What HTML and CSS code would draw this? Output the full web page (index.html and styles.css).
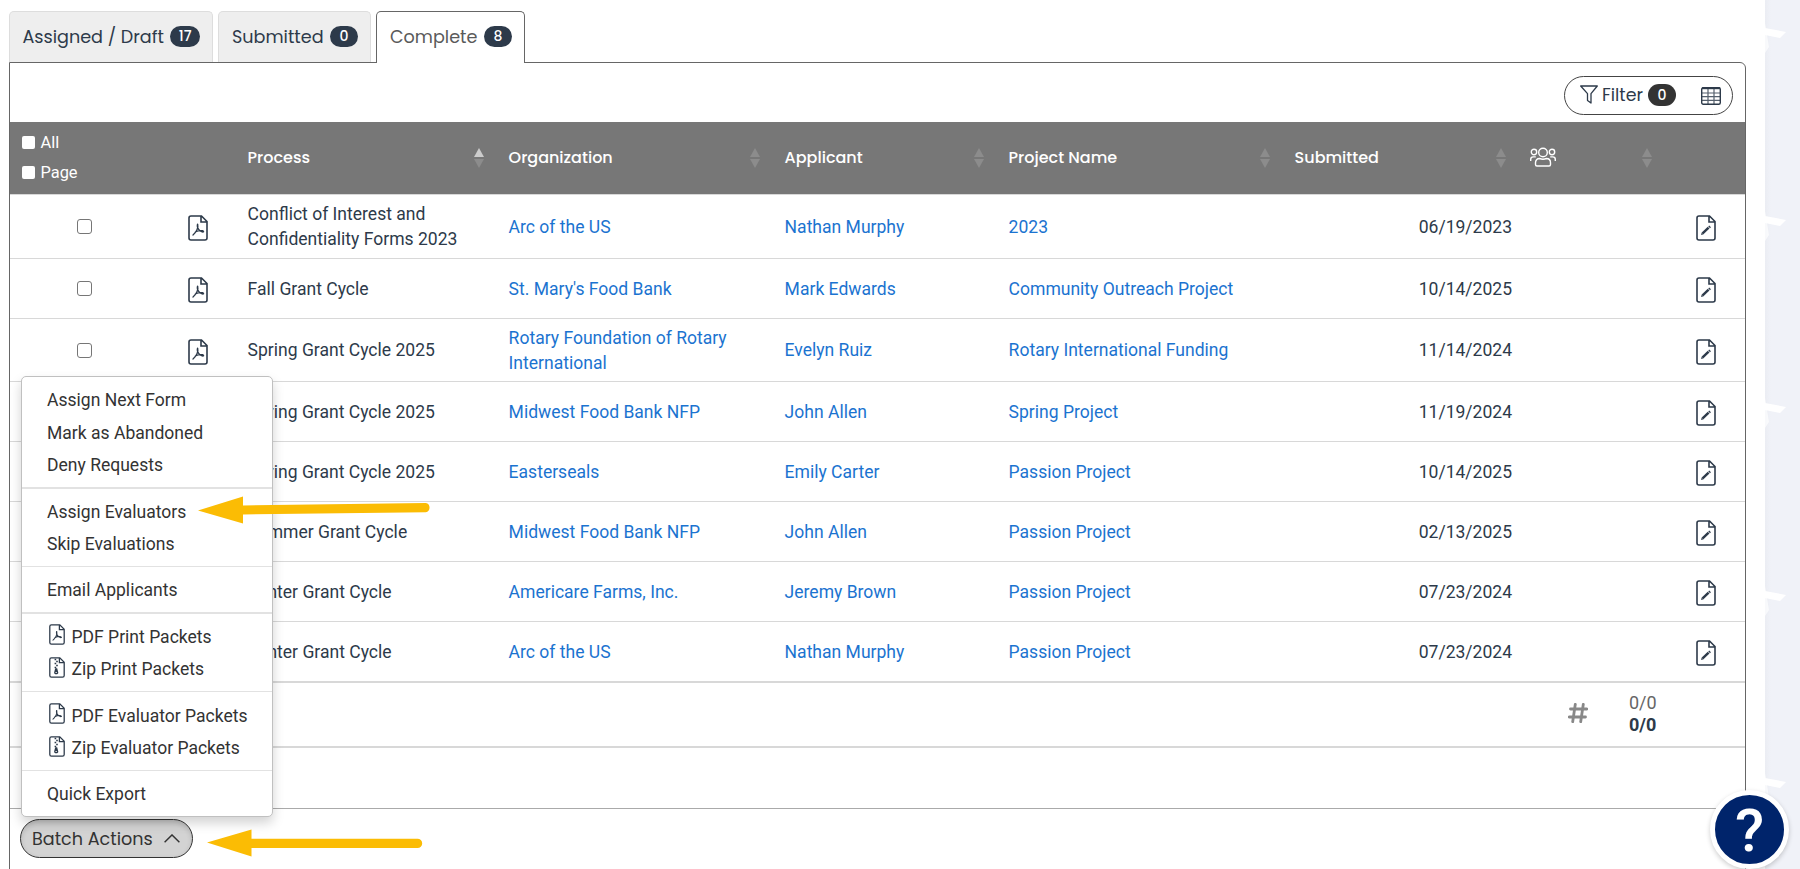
FILE: index.html
```html
<!DOCTYPE html>
<html lang="en">
<head>
<meta charset="utf-8">
<title>Requests</title>
<link rel="stylesheet" href="styles.css">
</head>
<body>
<svg class="defs" aria-hidden="true">
  <symbol id="pdf" viewBox="0 0 20 26"><path d="M3 1h10.500L19 6.500V23a2 2 0 0 1-2 2H3a2 2 0 0 1-2-2V3a2 2 0 0 1 2-2zM13 1v6h6" fill="none" stroke="currentColor" stroke-width="1.600"/><path d="M9.500 9.200c-.8 3 .6 5 2.400 6.500 1.400 1 3 1.600 3.700 1M9.700 9.200c1.100 3.500-1.800 8.500-4.700 10.800M7.300 17c2.200-1.200 4.700-1.700 7.700-1.300" fill="none" stroke="currentColor" stroke-width="1.300" stroke-linecap="round"/></symbol>
  <symbol id="zip" viewBox="0 0 20 26"><path d="M3 1h10.500L19 6.500V23a2 2 0 0 1-2 2H3a2 2 0 0 1-2-2V3a2 2 0 0 1 2-2zM13 1v6h6" fill="none" stroke="currentColor" stroke-width="1.600"/><path d="M7 3h2M9 5.500h2M7 8h2M9 10.500h2M7 13h2" stroke="currentColor" stroke-width="1.700"/><path d="M7.800 14h2.400l1.400 5.300c.2 1.300-.9 2.200-2.600 2.200s-2.800-.9-2.600-2.200z" fill="currentColor"/><path d="M8 19.200h2" stroke="#fff" stroke-width="1"/></symbol>
  <symbol id="edit" viewBox="0 0 20 26"><path d="M3 1h10.500L19 6.500V23a2 2 0 0 1-2 2H3a2 2 0 0 1-2-2V3a2 2 0 0 1 2-2zM13 1v6h6" fill="none" stroke="currentColor" stroke-width="1.600"/><path d="M6.600 18.300l6-5.600" stroke="currentColor" stroke-width="2.500"/><path d="M13.100 12.300l1-.9" stroke="currentColor" stroke-width="2.500"/><path d="M5.100 20l.6-2.500 1.900 1.800z" fill="currentColor"/></symbol>
  <symbol id="sort" viewBox="0 0 10 20"><path d="M5 0l5 9H0z" fill="currentColor"/><path d="M0 11h10l-5 9z"/></symbol>
</svg>
<main class="page">
  <nav class="tabs">
    <a class="tab tab-draft"><span>Assigned / Draft</span><b class="badge">17</b></a>
    <a class="tab tab-submitted"><span>Submitted</span><b class="badge">0</b></a>
    <a class="tab tab-complete active"><span>Complete</span><b class="badge">8</b></a>
  </nav>
  <section class="panel">
    <div class="toolbar">
      <div class="filter">
        <svg class="funnel" viewBox="0 0 18 19"><path d="M.7 1h16.600L11 8.600V18l-3.500-2.600V8.600z" fill="none" stroke="currentColor" stroke-width="1.300" stroke-linejoin="round"/></svg>
        <span class="filter-label">Filter</span><b class="badge dark">0</b>
        <svg class="gridicon" viewBox="0 0 20 18"><rect x=".7" y=".7" width="18.600" height="16.600" rx="1.500" fill="none" stroke="currentColor" stroke-width="1.400"/><path d="M1 1.200h18" stroke="currentColor" stroke-width="2"/><path d="M1 6h18M1 9.700h18M1 13.400h18M7 2v15M13 2v15" stroke="currentColor" stroke-width="1.200" opacity=".8"/></svg>
      </div>
    </div>
    <div class="row head">
      <div class="picks"><label><i class="box solid"></i><span>All</span></label><label><i class="box solid"></i><span>Page</span></label></div>
      <div></div>
      <div class="th sorted"><span>Process</span><svg class="sort"><use href="#sort"/></svg></div>
      <div class="th"><span>Organization</span><svg class="sort"><use href="#sort"/></svg></div>
      <div class="th"><span>Applicant</span><svg class="sort"><use href="#sort"/></svg></div>
      <div class="th"><span>Project Name</span><svg class="sort"><use href="#sort"/></svg></div>
      <div class="th"><span>Submitted</span><svg class="sort"><use href="#sort"/></svg></div>
      <div class="th"><svg class="group" viewBox="0 0 26 20"><g fill="none" stroke="currentColor" stroke-width="1.400"><circle cx="13" cy="5.500" r="4.300"/><circle cx="4" cy="5" r="2.700"/><circle cx="22" cy="5" r="2.700"/><path d="M5.500 17.500v-1.700c0-2.500 1.500-4.300 4-4.300 2 .8 5 .8 7 0 2.500 0 4 1.800 4 4.300v1.700c0 .9-.6 1.500-1.500 1.500H7c-.9 0-1.500-.6-1.500-1.500z"/><path d="M.7 14v-1.500c0-1.600 1-2.600 2.500-2.600h2.600M25.300 14v-1.500c0-1.600-1-2.600-2.500-2.600h-2.600"/></g></svg><svg class="sort"><use href="#sort"/></svg></div>
      <div></div>
    </div>
    <div class="row first"><div class="mid"><i class="box"></i></div><div class="mid"><svg class="doc"><use href="#pdf"/></svg></div><div class="td">Conflict of Interest and Confidentiality Forms 2023</div><a class="td">Arc of the US</a><a class="td">Nathan Murphy</a><a class="td">2023</a><div class="td date">06/19/2023</div><div></div><div class="mid"><svg class="doc"><use href="#edit"/></svg></div></div>
    <div class="row"><div class="mid"><i class="box"></i></div><div class="mid"><svg class="doc"><use href="#pdf"/></svg></div><div class="td">Fall Grant Cycle</div><a class="td">St. Mary's Food Bank</a><a class="td">Mark Edwards</a><a class="td">Community Outreach Project</a><div class="td date">10/14/2025</div><div></div><div class="mid"><svg class="doc"><use href="#edit"/></svg></div></div>
    <div class="row third"><div class="mid"><i class="box"></i></div><div class="mid"><svg class="doc"><use href="#pdf"/></svg></div><div class="td">Spring Grant Cycle 2025</div><a class="td">Rotary Foundation of Rotary International</a><a class="td">Evelyn Ruiz</a><a class="td">Rotary International Funding</a><div class="td date">11/14/2024</div><div></div><div class="mid"><svg class="doc"><use href="#edit"/></svg></div></div>
    <div class="row"><div class="mid"><i class="box"></i></div><div class="mid"><svg class="doc"><use href="#pdf"/></svg></div><div class="td">Spring Grant Cycle 2025</div><a class="td">Midwest Food Bank NFP</a><a class="td">John Allen</a><a class="td">Spring Project</a><div class="td date">11/19/2024</div><div></div><div class="mid"><svg class="doc"><use href="#edit"/></svg></div></div>
    <div class="row"><div class="mid"><i class="box"></i></div><div class="mid"><svg class="doc"><use href="#pdf"/></svg></div><div class="td">Spring Grant Cycle 2025</div><a class="td">Easterseals</a><a class="td">Emily Carter</a><a class="td">Passion Project</a><div class="td date">10/14/2025</div><div></div><div class="mid"><svg class="doc"><use href="#edit"/></svg></div></div>
    <div class="row"><div class="mid"><i class="box"></i></div><div class="mid"><svg class="doc"><use href="#pdf"/></svg></div><div class="td">Summer Grant Cycle</div><a class="td">Midwest Food Bank NFP</a><a class="td">John Allen</a><a class="td">Passion Project</a><div class="td date">02/13/2025</div><div></div><div class="mid"><svg class="doc"><use href="#edit"/></svg></div></div>
    <div class="row"><div class="mid"><i class="box"></i></div><div class="mid"><svg class="doc"><use href="#pdf"/></svg></div><div class="td">Winter Grant Cycle</div><a class="td">Americare Farms, Inc.</a><a class="td">Jeremy Brown</a><a class="td">Passion Project</a><div class="td date">07/23/2024</div><div></div><div class="mid"><svg class="doc"><use href="#edit"/></svg></div></div>
    <div class="row last"><div class="mid"><i class="box"></i></div><div class="mid"><svg class="doc"><use href="#pdf"/></svg></div><div class="td">Winter Grant Cycle</div><a class="td">Arc of the US</a><a class="td">Nathan Murphy</a><a class="td">Passion Project</a><div class="td date">07/23/2024</div><div></div><div class="mid"><svg class="doc"><use href="#edit"/></svg></div></div>
    <div class="totals">
      <svg class="hash" viewBox="0 0 20 20"><path d="M7.300 1.300L4.700 18.700M15.300 1.300l-2.600 17.400M2.500 6h16.200M1.300 14h16.200" fill="none" stroke="currentColor" stroke-width="2.800" stroke-linecap="round"/></svg>
      <div class="counts"><span>0/0</span><b>0/0</b></div>
    </div>
    <div class="pager"></div>
    <div class="actions">
      <button class="batch"><span>Batch Actions</span><svg viewBox="0 0 16 9"><path d="M.6 8.300L8 .9l7.400 7.400" fill="none" stroke="currentColor" stroke-width="1.400"/></svg></button>
    </div>
  </section>
</main>
<aside class="backdrop"></aside>
<div class="menu">
  <a><span>Assign Next Form</span></a><a><span>Mark as Abandoned</span></a><a><span>Deny Requests</span></a><hr class="thick">
  <a><span>Assign Evaluators</span></a><a><span>Skip Evaluations</span></a><hr>
  <a><span>Email Applicants</span></a><hr class="thick">
  <a><svg><use href="#pdf"/></svg><span>PDF Print Packets</span></a><a><svg><use href="#zip"/></svg><span>Zip Print Packets</span></a><hr>
  <a><svg><use href="#pdf"/></svg><span>PDF Evaluator Packets</span></a><a><svg><use href="#zip"/></svg><span>Zip Evaluator Packets</span></a><hr>
  <a><span>Quick Export</span></a>
</div>
<svg class="pointers" viewBox="0 0 1800 869">
  <path d="M198 510.500L243 496.500V505.500L425.800 503a4.700 4.700 0 0 1 0 9.200L243 514.500V523.500z"/>
  <path d="M207 842.500L251.500 829.500V838.700H417.500a4.700 4.700 0 0 1 0 9.400H251.500V856.500z"/>
</svg>
<svg class="backdrop-marks" viewBox="0 0 36 869"><defs><g id="mark"><path d="M1 28l21 4-6 6-15-3z"/><path d="M1 23l1 5-1 1zM1 35h2l2 12-4 6z" opacity=".65"/></g></defs><use href="#mark"/><use href="#mark" y="188"/><use href="#mark" y="375"/><use href="#mark" y="563"/><use href="#mark" y="750"/></svg>
<div class="help"><span>?</span></div>
</body>
</html>
```
FILE: styles.css
```css
* { box-sizing: border-box; }
html, body { height: 869px; overflow: hidden; }
body {
  margin: 0;
  display: flex;
  position: relative;
  background: #f0f2f8;
  color: #2d3a4a;
  font: 17.550px/25px Roboto, sans-serif;
}
.defs { position: absolute; width: 0; height: 0; }
.page { width: 1765px; height: 869px; padding: 11px 19px 0 9px; background: #fff; }
.backdrop { flex: 1; background: linear-gradient(90deg, #ebedf3, #f0f2f8 6px); }
.tabs { display: flex; gap: 5px; height: 51px; }
.tab {
  display: flex; align-items: center; justify-content: space-between;
  height: 51px; padding: 0 12px 2px 13px;
  border: 1px solid #ddd; border-bottom: 0; border-radius: 5px 5px 0 0;
  background: #eee;
}
.tab span { margin-top: 2px; }
.tab, .filter-label, .th, .batch { font-family: Poppins, Inter, sans-serif; white-space: nowrap; }
.tab { font-size: 17.600px; }
.tab-draft { width: 204px; padding-left: 12.500px; }
.tab-submitted { width: 153px; }
.tab-complete { width: 149px; }
.tab.active { height: 52px; padding-bottom: 3px; background: #fff; border-color: #666; color: #5a5a5a; z-index: 1; }
.badge {
  display: flex; align-items: center; justify-content: center; flex: none;
  min-width: 28px; height: 21px; padding: 0 8.500px; border-radius: 11px;
  background: #2d3a4a; color: #fff; font: 500 14px/21px Poppins, Inter, sans-serif;
}
.badge.dark { background: #333; height: 22px; margin-top: -1px; }
.panel { width: 1737px; height: 830px; border: 1px solid #666; border-radius: 0 6px 0 0; }
.toolbar { height: 59px; padding: 13px 12px 0 0; display: flex; justify-content: flex-end; }
.filter {
  display: flex; align-items: center; width: 169px; height: 39px;
  padding-left: 15px; border: 1px solid #444; border-radius: 20px;
}
.funnel { width: 18px; height: 19px; margin-top: -2px; }
.filter-label { width: 41px; margin: -1px 5px 0 4px; font-size: 17.400px; }
.gridicon { width: 20px; height: 18px; margin-left: 25px; }
.row {
  display: grid; grid-template-columns: 148px 80px 261px 276px 224px 286px 236px 146px 78px;
  align-items: center; height: 60px; border-bottom: 1px solid #d8d8d8;
}
.row.first { height: 64px; }
.row.third { height: 63px; }
.row.last { height: 61px; border-bottom-width: 2px; }
.head { height: 73px; background: #777; color: #fff; }
.picks { display: flex; flex-direction: column; gap: 5px; padding: 0 0 1px 12px; }
.picks label { display: flex; align-items: center; gap: 6px; height: 25px; font-size: 16.400px; }
.picks span { margin: -1px 0 0 -.5px; }
.box { width: 15px; height: 15px; border: 1.5px solid #767676; border-radius: 3px; background: #fff; }
.box.solid { width: 13px; height: 13px; border: 0; border-radius: 2px; }
.mid { display: flex; justify-content: center; }
.doc { width: 20px; height: 26px; margin-top: 3px; }
.td { padding: 1px 9px 0 9.600px; }
a.td { color: #1b73d0; }
.date { text-align: right; }
.th { display: flex; align-items: center; justify-content: space-between; padding: 0 14.800px 0 9.600px; font-size: 16px; font-weight: 500; }
.th span { margin-top: -2px; }
.sort { width: 10px; height: 20px; fill: #8c8c8c; color: #8c8c8c; }
.sorted .sort { color: #ccc; }
.group { width: 26px; height: 20px; margin: -3px 0 0 -1px; }
.totals { display: flex; height: 65px; border-bottom: 2px solid #d8d8d8; padding-left: 1558px; }
.hash { width: 20px; height: 20px; margin-top: 20px; color: #888; }
.counts { display: flex; flex-direction: column; margin: 9px 0 0 41px; line-height: 22px; color: #666; font-size: 18px; }
.counts b { color: #2d3a4a; }
.pager { height: 61px; border-bottom: 1px solid #aaa; }
.actions { padding: 10px; }
.batch {
  display: flex; align-items: center; justify-content: space-between;
  width: 173px; height: 39px; padding: 0 12px 0 11px;
  border: 1px solid #333; border-radius: 20px; background: #d3d3d3;
  box-shadow: inset 0 2px 5px #0002; color: #333; font-size: 17.600px;
}
.batch svg { width: 16px; height: 9px; }
.menu {
  position: absolute; left: 21px; top: 376px; width: 252px; height: 441px; padding: 6.800px 0;
  border: 1px solid #c0c0c0; border-radius: 5px; background: #fff;
  box-shadow: 0 6px 12px #0000002d; color: #333;
}
.menu a { display: flex; align-items: center; height: 32.400px; padding-left: 25px; }
.menu span { padding-top: 2px; }
.menu svg { width: 16px; height: 21px; margin: -3px 6.500px 0 2px; color: #2d3a4a; }
.menu hr { height: 1px; margin: 6px 0 7px; border: 0; background: #e2e2e2; }
.menu hr.thick { height: 2px; margin: 6px 0; }
.pointers { position: absolute; left: 0; top: 0; width: 1800px; height: 869px; fill: #fbbc04; }
.backdrop-marks { position: absolute; left: 1764px; top: 0; width: 36px; height: 869px; fill: #fff; }
.help {
  position: absolute; left: 1710px; top: 790px; width: 79px; height: 79px;
  display: flex; align-items: center; justify-content: center;
  border: 5.5px solid #fff; border-radius: 50%; background: #00246b;
  box-shadow: 0 2px 5px #0003; color: #fff; font-size: 60px; font-weight: 500; line-height: 68px;
}
.help span { margin-top: 3px; }
```
